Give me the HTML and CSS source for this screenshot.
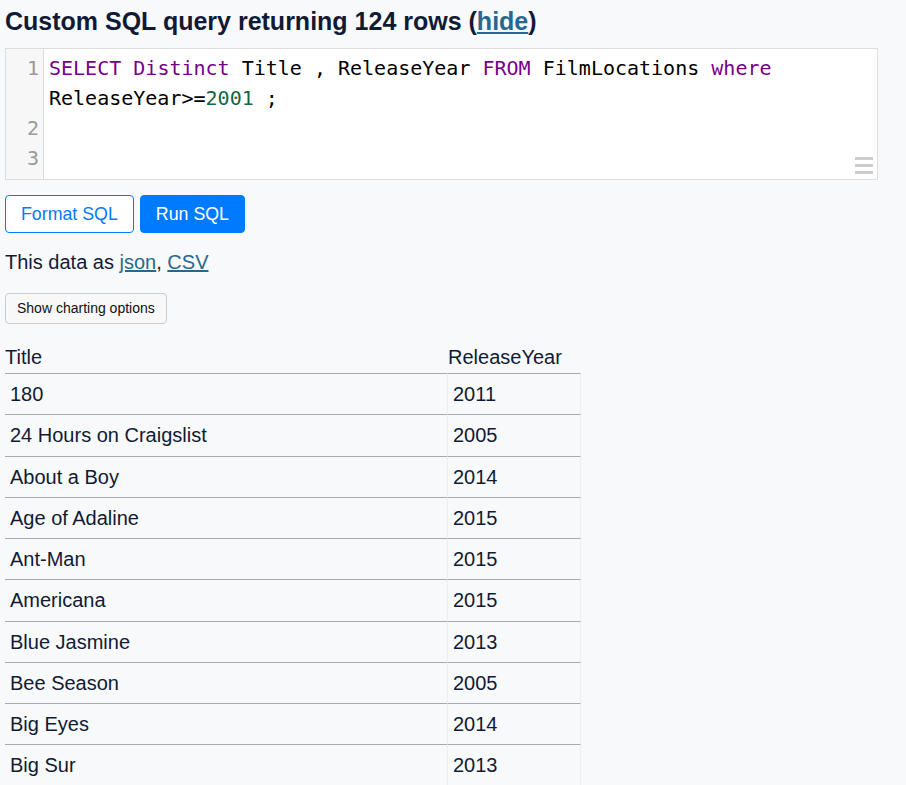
FILE: index.html
```html
<!DOCTYPE html>
<html lang="en">
<head>
<meta charset="utf-8">
<title>Custom SQL query</title>
<link rel="stylesheet" href="styles.css">
</head>
<body>
<div class="page">
  <h3 class="title">Custom SQL query returning 124 rows (<a href="#">hide</a>)</h3>

  <div class="editor">
    <div class="gutter">
      <div class="ln ln-wrap">1</div>
      <div class="ln">2</div>
      <div class="ln">3</div>
    </div>
    <div class="code">
      <div class="cl"><span class="kw">SELECT</span> <span class="kw">Distinct</span> Title , ReleaseYear <span class="kw">FROM</span> FilmLocations <span class="kw">where</span> ReleaseYear&gt;=<span class="num">2001</span> ;</div>
      <div class="cl">&nbsp;</div>
      <div class="cl">&nbsp;</div>
    </div>
    <div class="grip"><span></span><span></span><span></span></div>
  </div>

  <div class="actions">
    <button class="btn btn-outline" type="button">Format SQL</button>
    <button class="btn btn-primary" type="button">Run SQL</button>
  </div>

  <p class="export">This data as <a href="#">json</a>, <a href="#">CSV</a></p>

  <button class="btn-chart" type="button">Show charting options</button>

  <table class="rows">
    <colgroup><col class="c-title"><col class="c-year"></colgroup>
    <thead>
      <tr><th>Title</th><th>ReleaseYear</th></tr>
    </thead>
    <tbody>
      <tr><td>180</td><td>2011</td></tr>
      <tr><td>24 Hours on Craigslist</td><td>2005</td></tr>
      <tr><td>About a Boy</td><td>2014</td></tr>
      <tr><td>Age of Adaline</td><td>2015</td></tr>
      <tr><td>Ant-Man</td><td>2015</td></tr>
      <tr><td>Americana</td><td>2015</td></tr>
      <tr><td>Blue Jasmine</td><td>2013</td></tr>
      <tr><td>Bee Season</td><td>2005</td></tr>
      <tr><td>Big Eyes</td><td>2014</td></tr>
      <tr><td>Big Sur</td><td>2013</td></tr>
    </tbody>
  </table>
</div>
</body>
</html>
```

FILE: styles.css
```css
html, body {
  margin: 0;
  padding: 0;
}
body {
  background: #f8f9fa;
  color: #111a35;
  font-family: "Liberation Sans", Arial, sans-serif;
  font-size: 20px;
  line-height: 32px;
}
a {
  color: #276890;
  text-decoration: underline;
}
.page {
  padding: 1px 5px 0;
}
.title {
  margin: 0 0 7px;
  font-size: 25px;
  line-height: 40px;
  font-weight: 700;
}

/* SQL editor */
.editor {
  position: relative;
  display: flex;
  box-sizing: border-box;
  width: 873px;
  height: 132px;
  border: 1px solid #dddddd;
  background: #ffffff;
  font-family: "DejaVu Sans Mono", monospace;
  font-size: 20px;
  line-height: 30px;
  overflow: hidden;
}
.gutter {
  flex: 0 0 38px;
  box-sizing: border-box;
  padding-top: 4px;
  background: #f7f7f7;
  border-right: 1px solid #dddddd;
  color: #999999;
  text-align: right;
}
.ln {
  height: 30px;
  padding-right: 4px;
}
.ln-wrap {
  height: 60px;
}
.code {
  flex: 1;
  padding: 4px 4px 0 5px;
  color: #000000;
}
.cl {
  white-space: pre-wrap;
}
.kw { color: #770088; }
.num { color: #116644; }
.grip {
  position: absolute;
  right: 4px;
  bottom: 5px;
  width: 18px;
  display: flex;
  flex-direction: column;
  gap: 4px;
}
.grip span {
  display: block;
  height: 3px;
  background: #cccccc;
}

/* buttons */
.actions {
  display: flex;
  gap: 6px;
  margin-top: 15px;
}
.btn {
  box-sizing: border-box;
  height: 38px;
  padding: 0 15px;
  border: 1px solid #007bff;
  border-radius: 4px;
  font-family: "Liberation Sans", Arial, sans-serif;
  font-size: 17.8px;
  line-height: 36px;
  cursor: pointer;
}
.btn-outline {
  background: #ffffff;
  color: #007bff;
}
.btn-primary {
  background: #007bff;
  color: #ffffff;
}
.export {
  margin: 13px 0 0;
}
.btn-chart {
  display: block;
  box-sizing: border-box;
  margin-top: 15px;
  height: 31px;
  padding: 0 11px;
  border: 1px solid #cccccc;
  border-radius: 4px;
  background: #f8f8f8;
  color: #111111;
  font-family: "Liberation Sans", Arial, sans-serif;
  font-size: 14px;
  line-height: 29px;
}

/* results table */
.rows {
  margin-top: 18px;
  border-collapse: separate;
  border-spacing: 0;
  table-layout: fixed;
  width: 576px;
}
.c-title { width: 443px; }
.c-year { width: 133px; }
.rows th {
  padding: 0;
  font-weight: 400;
  text-align: left;
  line-height: 31px;
  white-space: nowrap;
}
.rows td {
  padding: 5px 5px 5.25px;
  border-top: 1px solid #aaaaaa;
  border-right: 1px solid #eeeeee;
  line-height: 30px;
  vertical-align: top;
}
```
